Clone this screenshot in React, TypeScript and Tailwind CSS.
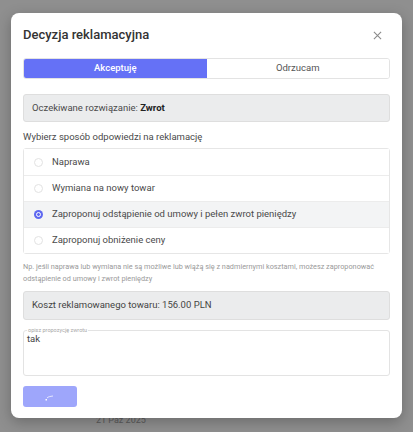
import React, { useState } from 'react';

const options = [
  'Naprawa',
  'Wymiana na nowy towar',
  'Zaproponuj odstąpienie od umowy i pełen zwrot pieniędzy',
  'Zaproponuj obniżenie ceny',
];

export default function App() {
  const [tab, setTab] = useState<'accept' | 'reject'>('accept');
  const [selected, setSelected] = useState(2);
  const [note, setNote] = useState('tak');

  return (
    <div
      className="relative w-[413px] h-[432px] overflow-hidden bg-[#8f8f8f] pt-[13px] px-[11px]"
      style={{ fontFamily: 'Roboto, "Noto Sans", sans-serif' }}
    >
      {/* page content behind the overlay */}
      <div className="absolute left-[96px] top-[414px] text-[9px] text-[#3a3a3a] opacity-60">21 Paź 2025</div>

      <div className="relative w-[391px] h-[405px] rounded-[8px] bg-white px-3 shadow-[0_4px_14px_rgba(0,0,0,0.25)] flex flex-col">
        <div className="h-[44px] flex items-center justify-between">
          <h2 className="text-[13px] font-medium text-[#333]">Decyzja reklamacyjna</h2>
          <button className="mr-[8px] text-[#8a8a8a]">
            <svg width="9" height="9" viewBox="0 0 10 10" stroke="currentColor" strokeWidth="1.2">
              <path d="M1 1l8 8M9 1l-8 8" />
            </svg>
          </button>
        </div>

        <div className="mt-[1px] flex h-[21px] rounded-[3px] border border-[#e3e3e3] overflow-hidden text-[9.5px]">
          <button
            onClick={() => setTab('accept')}
            className={
              tab === 'accept'
                ? 'flex-1 bg-[#6571f6] text-white font-medium'
                : 'flex-1 bg-white text-[#555]'
            }
          >
            Akceptuję
          </button>
          <button
            onClick={() => setTab('reject')}
            className={
              tab === 'reject'
                ? 'flex-1 bg-[#6571f6] text-white font-medium'
                : 'flex-1 bg-white text-[#555]'
            }
          >
            Odrzucam
          </button>
        </div>

        <div className="mt-[15px] h-[28px] flex items-center rounded-[3px] border border-[#dedede] bg-[#ebeced] px-[8px] text-[9.5px] text-[#4a4a4a]">
          Oczekiwane rozwiązanie:&nbsp;<span className="font-bold text-[#222]">Zwrot</span>
        </div>

        <p className="mt-[8px] text-[9.5px] leading-[14px] text-[#4a4a4a]">Wybierz sposób odpowiedzi na reklamację</p>

        <div className="mt-[4px] rounded-[3px] border border-[#e6e6e6] flex flex-col">
          {options.map((opt, i) => (
            <label
              key={opt}
              onClick={() => setSelected(i)}
              className={
                'h-[26px] flex items-center gap-[9px] px-[10px] text-[9.5px] text-[#4a4a4a] cursor-pointer ' +
                (i > 0 ? 'border-t border-[#ececec] ' : '') +
                (i === selected ? 'bg-[#f3f4f5]' : 'bg-white')
              }
            >
              {i === selected ? (
                <span className="w-[9px] h-[9px] rounded-full bg-[#5e68f0] flex items-center justify-center">
                  <span className="w-[5px] h-[5px] rounded-full border border-white bg-[#5e68f0]" />
                </span>
              ) : (
                <span className="w-[9px] h-[9px] rounded-full border border-[#e2e2e2] bg-white" />
              )}
              {opt}
            </label>
          ))}
        </div>

        <p className="mt-[7px] text-[7.3px] leading-[12px] text-[#9a9a9a]">
          Np. jeśli naprawa lub wymiana nie są możliwe lub wiążą się z nadmiernymi kosztami, możesz zaproponować
          odstąpienie od umowy i zwrot pieniędzy
        </p>

        <div className="mt-[6px] h-[29px] flex items-center rounded-[3px] border border-[#dedede] bg-[#ebeced] px-[8px] text-[9.5px] text-[#444]">
          Koszt reklamowanego towaru: 156.00 PLN
        </div>

        <fieldset className="mt-[7px] h-[49px] rounded-[3px] border border-[#e3e3e3] px-[2px]">
          <legend className="ml-[1px] px-[1px] text-[5.5px] leading-[6px] text-[#a8a8a8]">opisz propozycję zwrotu</legend>
          <textarea
            value={note}
            onChange={e => setNote(e.target.value)}
            className="w-full h-[38px] resize-none outline-none px-[1px] text-[9.5px] leading-[12px] text-[#444]"
          />
        </fieldset>

        <button className="mt-[10px] w-[54px] h-[21px] rounded-[3px] bg-[#9ea6fb] flex items-center justify-center">
          <svg width="10" height="8" viewBox="0 0 10 8">
            <path d="M2 5c1.5-1.5 3-1.5 6-2" stroke="white" strokeWidth="0.9" fill="none" opacity="0.8" />
            <rect x="0.5" y="6" width="1.5" height="1.5" fill="white" />
          </svg>
        </button>
      </div>
    </div>
  );
}
